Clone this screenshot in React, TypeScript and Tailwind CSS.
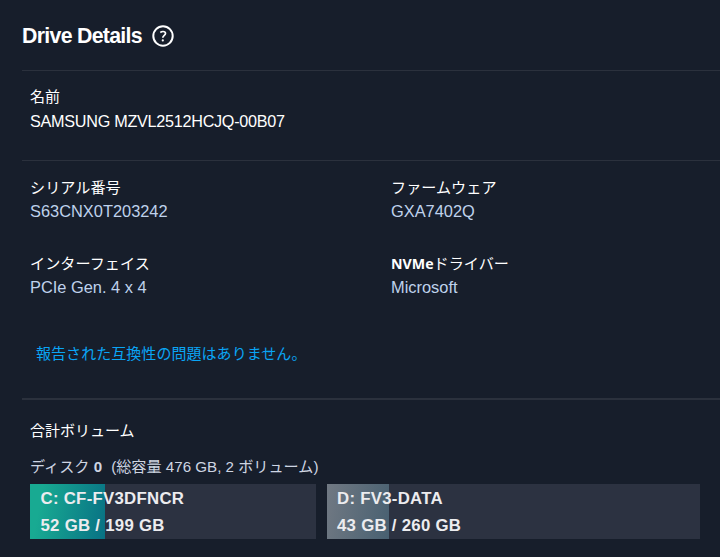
type Volume = {
  label: string;
  used: number;
  total: number;
  box: string;
  fill: string;
};

const volumes: Volume[] = [
  {
    label: "C: CF-FV3DFNCR",
    used: 52,
    total: 199,
    box: "w-[286px] pl-[10.5px]",
    fill: "bg-linear-[100deg] from-[#18aa92] from-15% to-[#087184]",
  },
  {
    label: "D: FV3-DATA",
    used: 43,
    total: 260,
    box: "w-[373px] pl-[10px]",
    fill: "bg-linear-[100deg] from-[#717983] to-[#486071]",
  },
];

function Field({
  label,
  value,
}: {
  label: React.ReactNode;
  value: string;
}) {
  return (
    <div className="h-[76px]">
      <div className="h-6 text-[15.1px] leading-[25px] tracking-[0.05px] text-white">
        {label}
      </div>
      <div className="h-6 text-[16.4px] leading-6 text-[#bfd2ec]">{value}</div>
    </div>
  );
}

function VolumeBar({ volume }: { volume: Volume }) {
  return (
    <div
      className={`relative h-[55px] bg-[#2c3241] text-[16.8px] font-bold tracking-[0.28px] text-[#ececef] ${volume.box}`}
    >
      <div
        className={`absolute inset-y-0 left-0 ${volume.fill}`}
        style={{ width: `${(volume.used / volume.total) * 100}%` }}
      />
      <div className="relative h-[27px] leading-[29px]">{volume.label}</div>
      <div className="relative h-[27px] leading-[29px]">
        {volume.used} GB / {volume.total} GB
      </div>
    </div>
  );
}

function App() {
  return (
    <main className="h-[557px] w-[720px] overflow-hidden bg-[#171e2b] pl-[22px] font-['Liberation_Sans','Noto_Sans_CJK_JP',sans-serif] whitespace-nowrap">
      <header className="flex h-[70px] items-center gap-[10px] pt-[2px]">
        <h1 className="pt-[2px] text-[21.3px] font-bold tracking-[-0.7px] text-white">
          Drive Details
        </h1>
        <svg width="22" height="22" viewBox="0 0 22 22" fill="none">
          <circle cx="11" cy="11" r="9.7" stroke="#fff" strokeWidth="2" />
          <path
            d="M8.3 7.5C9.2 6.8 10 6.5 11 6.5c1.6 0 2.5.8 2.5 2 0 1.9-2.7 2-2.7 4.3"
            stroke="#fff"
            strokeWidth="1.7"
          />
          <circle cx="10.8" cy="15.4" r="1.1" fill="#fff" />
        </svg>
      </header>

      <section className="h-[90px] border-t border-[#2b313d] pt-[14px] pl-2 text-white">
        <div className="h-6 text-[15px] leading-6">名前</div>
        <div className="text-[16.2px] leading-6 tracking-[-0.27px]">
          SAMSUNG MZVL2512HCJQ-00B07
        </div>
      </section>

      <section className="h-[238px] border-t border-[#2b313d] pt-[14px] pl-2">
        <div className="grid grid-cols-[361px_1fr]">
          <Field label="シリアル番号" value="S63CNX0T203242" />
          <Field label="ファームウェア" value="GXA7402Q" />
          <Field label="インターフェイス" value="PCIe Gen. 4 x 4" />
          <Field
            label={
              <>
                <b className="font-['Open_Sans'] text-[14.2px] tracking-normal">
                  NVMe
                </b>
                ドライバー
              </>
            }
            value="Microsoft"
          />
        </div>
        <p className="mt-[14px] pl-[6px] text-[15px] leading-[25px] tracking-[0.05px] text-[#0aa5f5]">
          報告された互換性の問題はありません。
        </p>
      </section>

      <section className="border-t-2 border-[#2b313d] pt-[19px] pl-2">
        <h2 className="text-[15px] leading-6 text-white">合計ボリューム</h2>
        <div className="mt-3 h-[29px] text-[15.15px] leading-6 text-[#ced5e2]">
          ディスク <b>0</b>
          <span className="ml-[9px]">(総容量 476 GB, 2 ボリューム)</span>
        </div>
        <div className="flex gap-[11px]">
          {volumes.map((volume) => (
            <VolumeBar key={volume.label} volume={volume} />
          ))}
        </div>
      </section>
    </main>
  );
}

export default App;
